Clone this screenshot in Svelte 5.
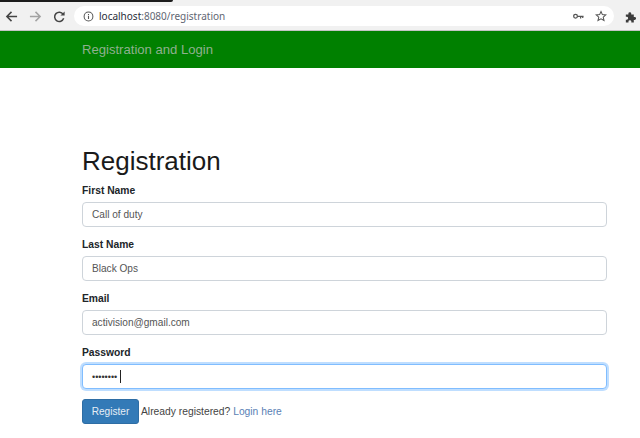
<script>
  const fields = [
    { label: 'First Name', type: 'text', value: 'Call of duty' },
    { label: 'Last Name', type: 'text', value: 'Black Ops' },
    { label: 'Email', type: 'text', value: 'activision@gmail.com' },
    { label: 'Password', type: 'password', value: '••••••••' }
  ];
</script>

<div class="page">
  <div class="tabstrip"><div class="tabedge"></div></div>
  <div class="toolbar">
    <svg class="tb" width="13" height="13" viewBox="0 0 14 14"><path d="M13 7H2.500M7 2 2 7l5 5" fill="none" stroke="#444" stroke-width="1.600"/></svg>
    <svg class="tb fwd" width="13" height="13" viewBox="0 0 14 14"><path d="M1 7h10.500M7 2l5 5-5 5" fill="none" stroke="#a3a3a3" stroke-width="1.600"/></svg>
    <svg class="tb reload" width="13" height="13" viewBox="0 0 14 14"><path d="M11.500 9a5 5 0 1 1-.6-4.500" fill="none" stroke="#444" stroke-width="1.600"/><path d="M12.500 1.500v4.500H8z" fill="#444"/></svg>
    <div class="omnibox">
      <svg class="info" width="11" height="11" viewBox="0 0 12 12"><circle cx="6" cy="6" r="4.800" fill="none" stroke="#555" stroke-width="1.100"/><path d="M6 5.200v3.400M6 3.300v1.100" stroke="#555" stroke-width="1.200"/></svg>
      <span class="url"><span class="host">localhost</span>:8080/registration</span>
      <svg class="key" width="11" height="7" viewBox="0 0 13 8"><circle cx="3" cy="3.800" r="2.200" fill="none" stroke="#555" stroke-width="1.500"/><path d="M5 3.800h7.500M9 3.800v2.500M11.500 3.800v2" stroke="#555" stroke-width="1.500"/></svg>
      <svg class="star" width="12" height="12" viewBox="0 0 14 14"><path d="m7 1.700 1.600 3.700 4 .3-3 2.600.9 3.900L7 10.200l-3.500 2 .9-3.900-3-2.600 4-.3z" fill="none" stroke="#555" stroke-width="1.200"/></svg>
    </div>
    <svg class="puzzle" width="11" height="12" viewBox="0 0 13 14"><path d="M1 4h3V3a1.700 1.700 0 0 1 3.400 0v1h3v3h1a1.700 1.700 0 0 1 0 3.400h-1v3H7.500v-1a1.700 1.700 0 0 0-3.400 0v1H1v-3.200h1a1.700 1.700 0 0 0 0-3.400H1z" fill="#3c3c3c"/></svg>
  </div>

  <nav class="navbar"><span class="brand">Registration and Login</span></nav>

  <main class="container">
    <h1>Registration</h1>
    <form>
      {#each fields as f, i}
        <div class="group">
          <span class="lbl">{f.label}</span>
          <div class="input" class:focus={i === 3}>
            {#if f.type === 'password'}
              <span class="dots">{f.value}</span><span class="caret"></span>
            {:else}
              {f.value}
            {/if}
          </div>
        </div>
      {/each}
      <div class="actions">
        <span class="btn">Register</span>
        <span class="note">Already registered? <span class="link">Login here</span></span>
      </div>
    </form>
  </main>
</div>

<style>
  :global(body) { margin: 0; background: #fff; }
  .page {
    width: 640px;
    height: 438px;
    overflow: hidden;
    font-family: "Liberation Sans", Arial, sans-serif;
    color: #212529;
    background: #fff;
  }
  .tabstrip { height: 3px; background: #f1f1f1; }
  .tabedge { width: 173px; height: 2px; background: #1c1c1c; border-radius: 0 0 3px 0; }
  .toolbar {
    height: 27px;
    background: #f1f1f1;
    border-bottom: 1px solid #c4c4c4;
    display: flex;
    align-items: center;
    padding-left: 5px;
  }
  .tb { flex: none; }
  .fwd { margin-left: 11px; }
  .reload { margin-left: 11px; }
  .omnibox {
    margin-left: 8px;
    margin-bottom: 1px;
    width: 540px;
    height: 20px;
    border-radius: 10px;
    background: #fff;
    display: flex;
    align-items: center;
    flex: none;
    padding-left: 9px;
    box-sizing: border-box;
  }
  .info { flex: none; }
  .url {
    margin-left: 5px;
    font-family: "Noto Sans", "Open Sans", sans-serif;
    font-size: 10px;
    color: #5f6672;
  }
  .host { color: #2a2e3a; }
  .key { margin-left: auto; flex: none; }
  .star { margin-left: 11px; margin-right: 7px; flex: none; }
  .puzzle { margin-left: 11px; flex: none; }
  .navbar {
    box-sizing: border-box;
    height: 37px;
    padding-bottom: 1px;
    background: #008000;
    display: flex;
    align-items: center;
    padding-left: 82px;
  }
  .brand { font-size: 13.1px; color: #8fb08f; }
  .container { padding: 77px 33px 0 82px; }
  h1 {
    margin: 0 0 6px;
    font-size: 26px;
    font-weight: 400;
    line-height: 32px;
    color: #1a1a1a;
  }
  .group { margin-bottom: 10px; }
  .lbl {
    display: block;
    font-size: 10.3px;
    font-weight: 700;
    line-height: 14px;
    padding-top: 1px;
    margin-bottom: 4px;
    color: #212529;
  }
  .input {
    box-sizing: border-box;
    height: 25px;
    border: 1px solid #ced4da;
    border-radius: 4px;
    padding: 0 9px;
    display: flex;
    align-items: center;
    font-size: 10.1px;
    color: #555;
    background: #fff;
  }
  .input.focus {
    border-color: #80bdff;
    box-shadow: 0 0 0 2px rgba(0, 123, 255, 0.25);
  }
  .dots { color: #333; font-size: 9px; }
  .caret { width: 1px; height: 13px; background: #222; margin-left: 3px; }
  .actions { display: flex; align-items: center; margin-top: 9px; }
  .btn {
    box-sizing: border-box;
    width: 57px;
    height: 25px;
    background: #337ab7;
    border: 1px solid #2e6da4;
    border-radius: 3px;
    color: #e6eef5;
    font-size: 10.1px;
    display: flex;
    align-items: center;
    justify-content: center;
  }
  .note { margin-left: 2px; font-size: 10.3px; color: #444; }
  .link { color: #5a7fb5; }
</style>
